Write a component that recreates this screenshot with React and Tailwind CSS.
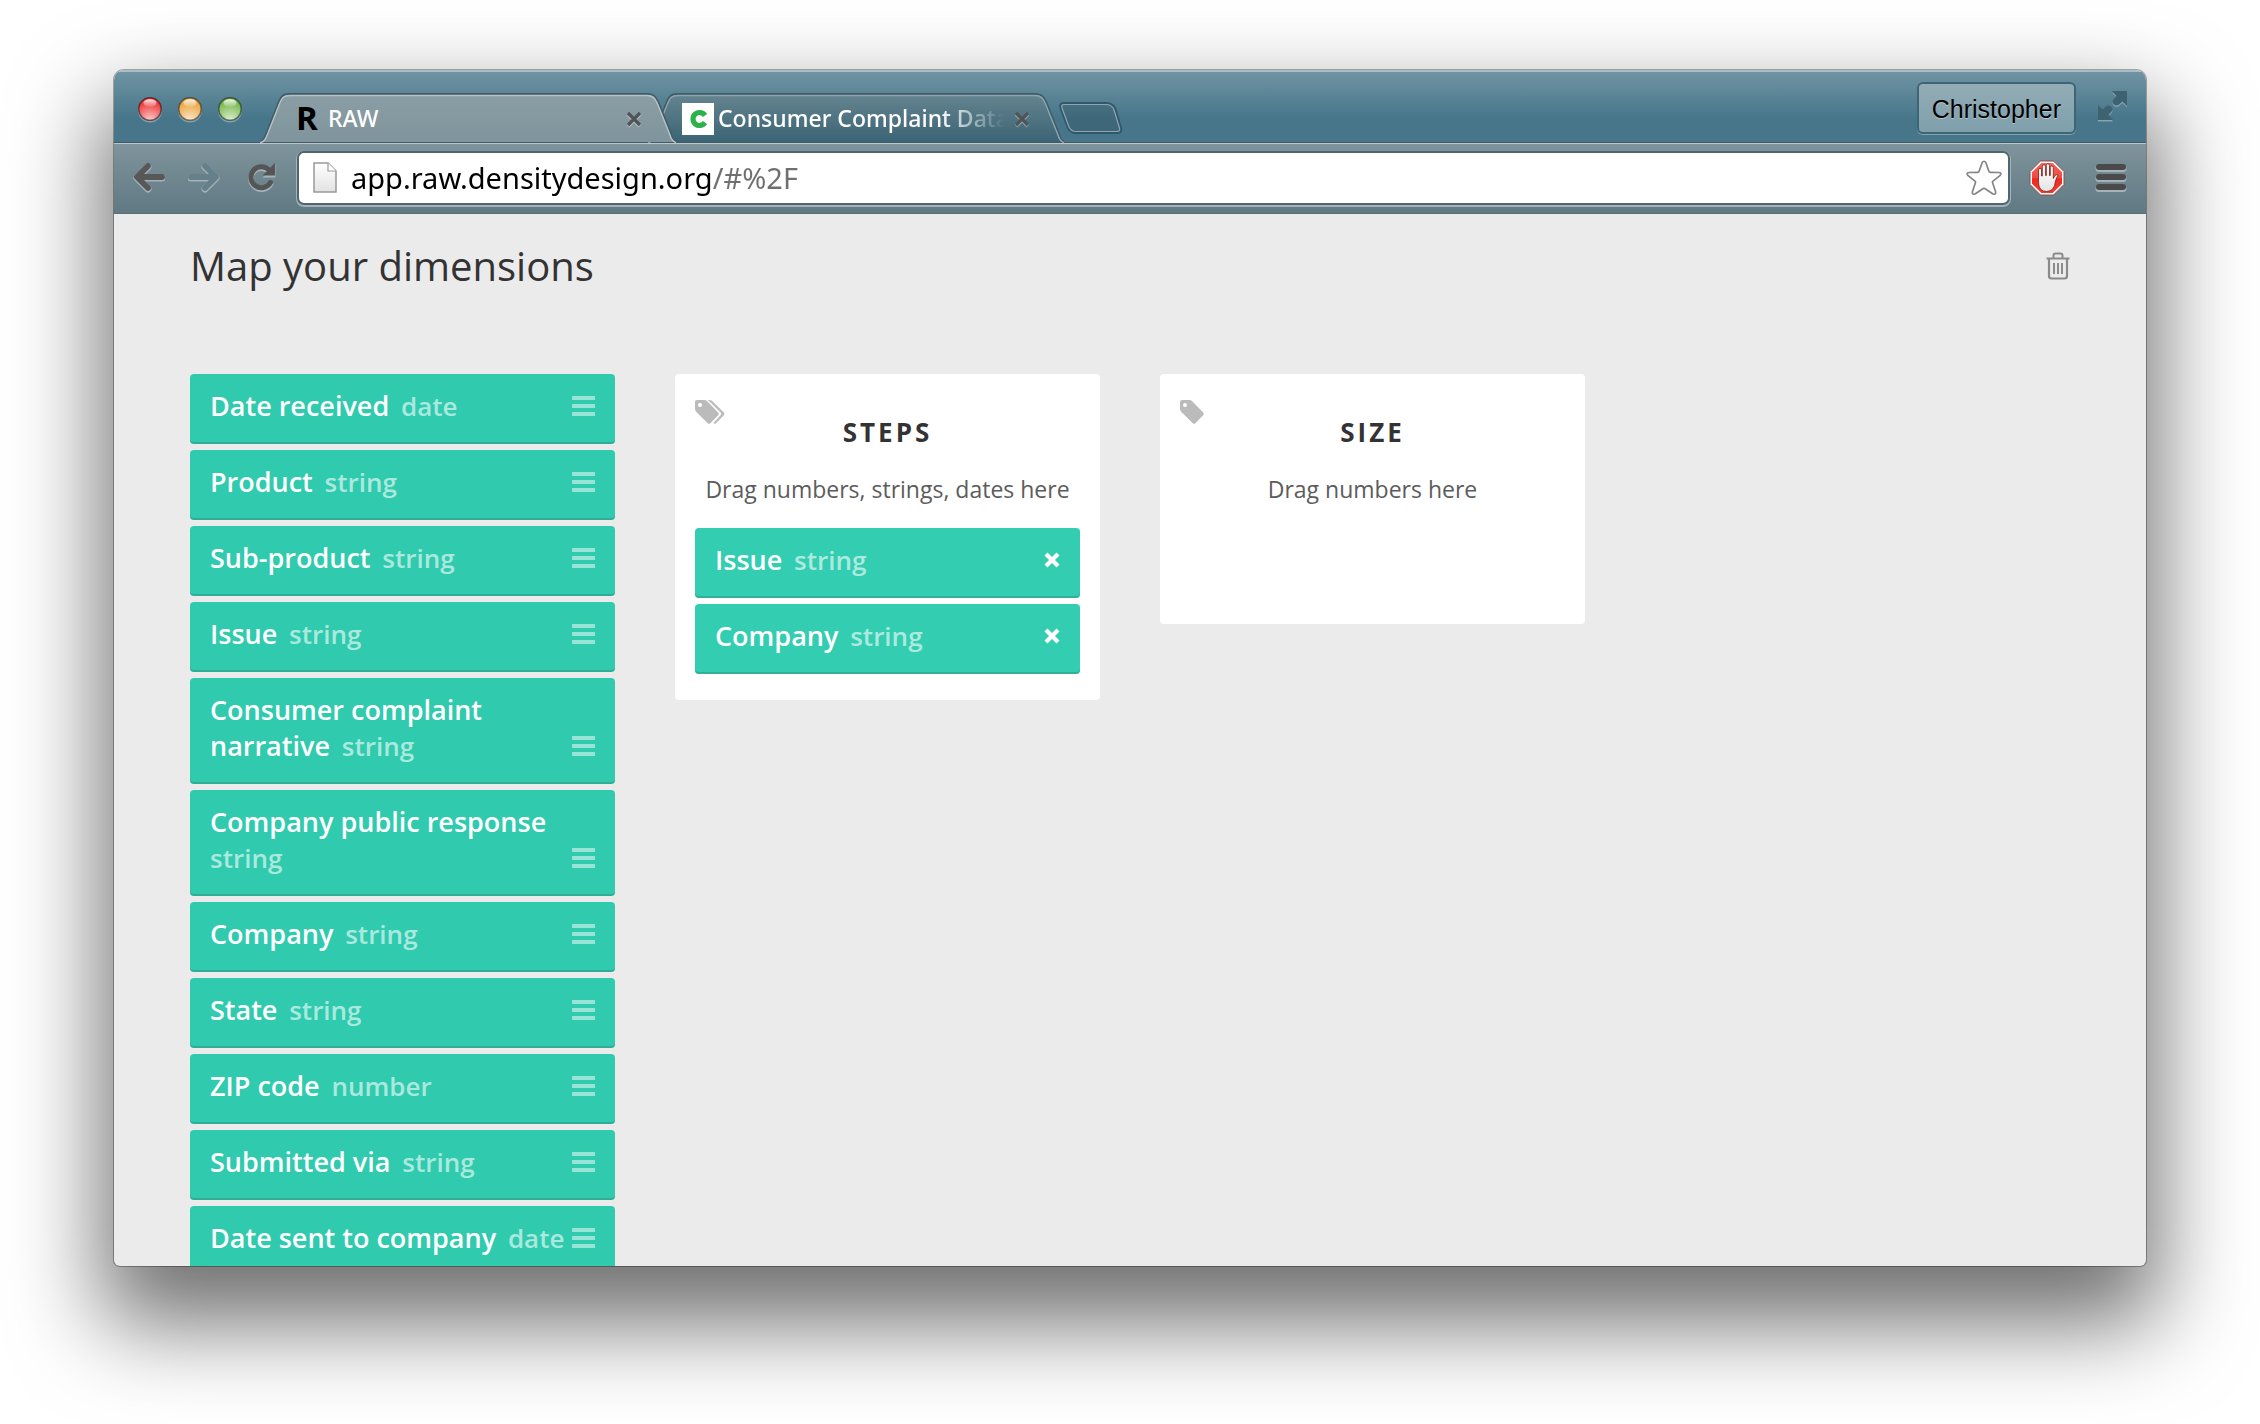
import React from "react";

const DIMENSIONS = [
  ["Date received", "date"],
  ["Product", "string"],
  ["Sub-product", "string"],
  ["Issue", "string"],
  ["Consumer complaint narrative", "string"],
  ["Company public response", "string"],
  ["Company", "string"],
  ["State", "string"],
  ["ZIP code", "number"],
  ["Submitted via", "string"],
  ["Date sent to company", "date"],
];

const TAG =
  "M0 2A2 2 0 0 1 2 0H9.3Q10.8 0 12 1.1L23.2 12.4Q24.3 13.8 23.2 15.2L15.4 23.2Q14.2 24.2 12.8 23.2L1.4 12Q0 10.5 0 9ZM5 3A2 2 0 1 0 5 7A2 2 0 1 0 5 3Z";

function TagIcon() {
  return (
    <svg width="24" height="24" viewBox="0 0 24 24" fill="#bbb" fillRule="evenodd" aria-hidden="true">
      <path d={TAG} />
    </svg>
  );
}

function TagsIcon() {
  return (
    <svg width="30" height="24" viewBox="0 0 30 24" fill="#bbb" fillRule="evenodd" aria-hidden="true">
      <path d={TAG} />
      <path d="M12 0H14.5Q16 0 17.2 1.1L28.8 12.4Q30 13.8 28.8 15.2L21 23.2Q19.8 24.2 18.3 23L25.6 15.3Q26.8 13.8 25.6 12.4L14 1.1Q13 .2 12 0Z" />
    </svg>
  );
}

function BarsIcon() {
  return (
    <svg width="23" height="20" viewBox="0 0 23 20" fill="#fff" fillOpacity="0.5" aria-hidden="true">
      <rect width="23" height="4" rx="0.5" />
      <rect y="8" width="23" height="4" rx="0.5" />
      <rect y="16" width="23" height="4" rx="0.5" />
    </svg>
  );
}

function Dimension({ name, type, removable }) {
  return (
    <li
      className={
        "flex items-end rounded-[4px] pt-[14px] pr-5 pb-5 pl-5 text-[26px] leading-9 text-white shadow-[inset_0_-2px_0_rgba(50,120,110,0.35)] " +
        (removable ? "bg-[#33cdb1]" : "cursor-move bg-[#30caae]")
      }
    >
      <span className="min-w-0 flex-1 font-semibold">
        <span className="pr-[5px] text-[27px]">{name}</span>{" "}
        <span className="text-white/60">{type}</span>
      </span>
      {removable ? (
        <button type="button" aria-label={"Remove " + name} className="flex h-9 items-center">
          <svg width="16" height="16" viewBox="0 0 16 16" stroke="#fff" strokeWidth="4.2" aria-hidden="true">
            <path d="M2 2L14 14M14 2L2 14" />
          </svg>
        </button>
      ) : (
        <span className="flex h-9 items-center">
          <BarsIcon />
        </span>
      )}
    </li>
  );
}

function DropPanel({ icon, title, hint, children }) {
  return (
    <section className="relative min-h-[250px] rounded-[4px] bg-white px-5 pt-10 pb-[26px] text-center">
      <span className="absolute top-[26px] left-5">{icon}</span>
      <h2 className="text-[26px] leading-9 font-bold tracking-[3px] text-[#333]">{title}</h2>
      <p className="-mx-4 mt-5 mb-5 text-[23px] leading-[38px] text-[#5c5c5c]">{hint}</p>
      <ul className="flex flex-col gap-[6px] text-left">{children}</ul>
    </section>
  );
}

function Light({ color }) {
  const id = "light-" + color.slice(1);
  return (
    <svg width="24" height="26" viewBox="0 0 24 26" aria-hidden="true">
      <defs>
        <radialGradient id={id} cx="0.5" cy="1" r="0.8">
          <stop offset="0" stopColor="#fff" stopOpacity="0.75" />
          <stop offset="1" stopColor="#fff" stopOpacity="0" />
        </radialGradient>
        <linearGradient id={id + "-top"} x1="0" y1="0" x2="0" y2="1">
          <stop offset="0" stopColor="#fff" stopOpacity="0.9" />
          <stop offset="1" stopColor="#fff" stopOpacity="0.1" />
        </linearGradient>
      </defs>
      <circle cx="12" cy="13.5" r="12" fill="#a9c2cc" opacity="0.6" />
      <circle cx="12" cy="12" r="11.5" fill={color} />
      <circle cx="12" cy="12" r="11.3" fill={"url(#" + id + ")"} stroke="#000" strokeOpacity="0.45" strokeWidth="1.6" />
      <ellipse cx="12" cy="6" rx="6.5" ry="3.8" fill={"url(#" + id + "-top)"} />
    </svg>
  );
}

function CloseIcon() {
  return (
    <svg width="16" height="18" viewBox="0 0 16 18" fill="none" aria-hidden="true">
      <path d="M2 4L14 16M14 4L2 16" stroke="#fff" strokeOpacity="0.35" strokeWidth="4" />
      <path d="M2 3L14 15M14 3L2 15" stroke="#505355" strokeWidth="3.2" />
    </svg>
  );
}

function Tab({ active, icon, title }) {
  const fill = active ? "tab-on" : "tab-off";
  return (
    <div className={active ? "relative z-10 h-[50px] w-[416px]" : "relative -ml-7 h-[50px] w-[416px]"}>
      <svg className="absolute inset-0" width="416" height="50" viewBox="0 0 416 50" fill="none" aria-hidden="true">
        <defs>
          <linearGradient id={fill} x1="0" y1="0" x2="0" y2="1">
            <stop offset="0" stopColor={active ? "#8b9ea5" : "#658490"} />
            <stop offset="1" stopColor={active ? "#7f949c" : "#3b6474"} />
          </linearGradient>
        </defs>
        <path
          d="M-1 49C4 48 5 44 7 39L18 11C21 3 23 1 30 1H387C394 1 396 4 399 11L411 41C412 45 414 48 417 49"
          fill={"url(#" + fill + ")"}
          stroke="#3f5d69"
          strokeWidth="2"
        />
        <path
          d="M-1 50C5 49 6 45 8 40L19 12C22 4 24 2.500 30 2.500H387C393 2.500 395 5 398 12L410 42C411 46 413 49 417 50"
          stroke={active ? "#b9c3c7" : "#8fa5ae"}
          strokeWidth="1.4"
        />
      </svg>
      <div className="relative flex h-12 items-center pt-1 pr-[34px] pl-[34px]">
        <button type="button" role="tab" aria-selected={active} className="flex min-w-0 flex-1 items-center gap-1 text-left">
          {icon}
          <span
            className={
              "min-w-0 flex-1 overflow-hidden pb-[2px] text-[23px] leading-[30px] font-medium whitespace-nowrap text-white " +
              (active ? "" : "[mask-image:linear-gradient(90deg,#000_75%,transparent_97%)]")
            }
          >
            {title}
          </span>
        </button>
        <button type="button" aria-label={"Close " + title}>
          <CloseIcon />
        </button>
      </div>
    </div>
  );
}

function NavArrow({ forward }) {
  const d = "M15 3L4 14L15 25M5 14H29";
  return (
    <svg width="32" height="30" viewBox="0 0 32 30" fill="none" strokeLinecap="round" strokeLinejoin="round" aria-hidden="true">
      <g transform={forward ? "translate(32 0) scale(-1 1)" : undefined}>
        <path d={d} transform="translate(0 1)" stroke="#a3b3b9" strokeWidth="7" />
        <path d={d} stroke={forward ? "#65808a" : "#585858"} strokeWidth="5.800" />
      </g>
    </svg>
  );
}

function ReloadIcon() {
  return (
    <svg width="30" height="30" viewBox="0 0 30 30" fill="none" aria-hidden="true">
      <g transform="translate(0 1.500)" stroke="#a3b3b9" fill="#a3b3b9">
        <path d="M22.500 7.500A10.500 10.500 0 1 0 23.500 19.500" fill="none" strokeWidth="5.500" strokeLinecap="round" />
        <path d="M28.500 0V13H15.500Z" stroke="none" />
      </g>
      <path d="M22.500 7.500A10.500 10.500 0 1 0 23.500 19.500" stroke="#555" strokeWidth="5" strokeLinecap="round" />
      <path d="M28 0V12.500H15.500Z" fill="#555" />
    </svg>
  );
}

function PageIcon() {
  return (
    <svg width="24" height="32" viewBox="0 0 24 32" aria-hidden="true">
      <defs>
        <linearGradient id="page" x1="0" y1="0" x2="0" y2="1">
          <stop offset="0" stopColor="#fff" />
          <stop offset="1" stopColor="#e2e2e4" />
        </linearGradient>
      </defs>
      <path d="M1 1H15L23 9V30H1Z" fill="url(#page)" stroke="#999" strokeWidth="1.500" />
      <path d="M15 1V9H23" fill="#fff" stroke="#999" strokeWidth="1.200" />
    </svg>
  );
}

function StarIcon() {
  return (
    <svg width="36" height="36" viewBox="0 0 36 36" fill="#fff" stroke="#858585" strokeWidth="1.700" strokeLinejoin="round" aria-hidden="true">
      <path d="M16.200 2.500Q18 0 19.800 2.500L23 11.500Q23.300 12.300 24.200 12.300L33 12.500Q36 13 34.200 15.300L27 21.200Q26.300 21.800 26.500 22.600L29.600 31.800Q30 35 27 34L18.800 28.500Q18 28 17.200 28.500L9 34Q6 35 6.400 31.800L9.500 22.600Q9.700 21.800 9 21.200L1.800 15.300Q0 13 3 12.500L11.800 12.300Q12.700 12.300 13 11.500Z" />
    </svg>
  );
}

function BlockIcon() {
  return (
    <svg width="36" height="36" viewBox="0 0 36 36" aria-hidden="true">
      <defs>
        <linearGradient id="stop" x1="0" y1="0" x2="0" y2="1">
          <stop offset="0" stopColor="#f4635c" />
          <stop offset="0.500" stopColor="#f04a41" />
          <stop offset="0.520" stopColor="#ee2a20" />
          <stop offset="1" stopColor="#fb3a2e" />
        </linearGradient>
        <linearGradient id="palm" x1="0" y1="0" x2="0" y2="1">
          <stop offset="0" stopColor="#fff" />
          <stop offset="1" stopColor="#e4e4e4" />
        </linearGradient>
      </defs>
      <path d="M11.500 1H24.500L35 11.500V24.500L24.500 35H11.500L1 24.500V11.500Z" fill="#fff" stroke="#8b4a4a" strokeWidth="1" />
      <path d="M12.300 3H23.700L33 12.300V23.700L23.700 33H12.300L3 23.700V12.300Z" fill="url(#stop)" />
      <path
        d="M9.500 20V10Q9.500 8.200 11 8.200T12.500 10V16H13.300V6.500Q13.300 4.800 15 4.800T16.600 6.500V15.500H17.300V5.500Q17.300 3.800 18.900 3.800T20.500 5.500V15.500H21.300V7.500Q21.300 5.900 22.800 5.900T24.300 7.500V18.500L26 15.500Q27.200 14 29 15.300Q27.500 17.500 26.500 21Q25.500 31.500 17.500 31.500Q9.500 31.500 9.500 22Z"
        fill="url(#palm)"
        stroke="#7c1d18"
        strokeWidth="0.800"
      />
    </svg>
  );
}

function MenuIcon() {
  return (
    <svg width="32" height="30" viewBox="0 0 32 30" aria-hidden="true">
      {[1, 11, 21].map((y) => (
        <g key={y}>
          <rect x="0.500" y={y + 1} width="31" height="7" rx="3.500" fill="#a3b3b9" />
          <rect x="1" y={y} width="30" height="6" rx="3" fill="#4a4a4a" />
        </g>
      ))}
    </svg>
  );
}

function FullscreenIcon() {
  const d =
    "M14 0H29V15L24.500 10.500L21 13.500Q18.500 15.500 16 13.500Q13.500 11 15.500 8.500L18.500 5ZM0 29V14L4.500 18.500L8 15.500Q10.500 13.500 13 15.500Q15.500 18 13.500 20.500L10.500 24L15 29Z";
  return (
    <svg width="30" height="31" viewBox="0 0 30 31" aria-hidden="true">
      <path d={d} transform="translate(0 1.500)" fill="#84a4b0" />
      <path d={d} fill="#3e6270" />
    </svg>
  );
}

function TrashIcon() {
  return (
    <svg width="24" height="28" viewBox="0 0 24 28" fill="none" stroke="#8a8a8a" aria-hidden="true">
      <path d="M0.500 6.500H23.500" strokeWidth="2" />
      <path d="M7.500 6V3.500Q7.500 1.500 9.500 1.500H14.500Q16.500 1.500 16.500 3.500V6" strokeWidth="2" />
      <path d="M3 7V24Q3 26.500 5.500 26.500H18.500Q21 26.500 21 24V7" strokeWidth="2.200" />
      <path d="M8 11V22M12 11V22M16 11V22" strokeWidth="2" />
    </svg>
  );
}

function Browser({ children }) {
  return (
    <div className="flex h-[calc(100vh-228px)] min-h-[600px] flex-col overflow-hidden rounded-t-[10px] rounded-b-[6px] bg-[#ebebeb] shadow-[0_0_0_1px_rgba(0,0,0,0.3),0_46px_90px_12px_rgba(0,0,0,0.56)]">
      <header className="shrink-0 font-['Noto_Sans','Open_Sans',sans-serif]">
        <div className="flex h-[73px] items-end border-t-2 border-[#a9bdc6] bg-linear-to-b from-[#6f94a3] to-[#47768a] to-65% pr-[18px] pl-6 shadow-[inset_0_-1px_0_#3f5d69]">
          <div className="mr-[18px] flex gap-4 self-center pt-1">
            {[["Close", "#ee3d3d"], ["Minimize", "#eda743"], ["Zoom", "#7cbb51"]].map(([label, color]) => (
              <button key={label} type="button" aria-label={label + " window"}>
                <Light color={color} />
              </button>
            ))}
          </div>
          <div role="tablist" className="flex">
            <Tab
              active
              title="RAW"
              icon={<span className="w-[30px] pb-[2px] pl-[2px] font-['Open_Sans',sans-serif] text-[33px] leading-8 font-bold text-black">R</span>}
            />
            <Tab
              active={false}
              title="Consumer Complaint Database"
              icon={
                <svg width="32" height="32" viewBox="0 0 32 32" aria-hidden="true">
                  <rect width="32" height="32" fill="#fff" />
                  <path d="M23 12.500A6.500 6.500 0 1 0 23 19.500" fill="none" stroke="#2cb24a" strokeWidth="5.200" />
                </svg>
              }
            />
          </div>
          <button type="button" aria-label="New tab" className="-ml-[5px] mb-2">
            <svg width="64" height="33" viewBox="0 0 64 33" fill="none" aria-hidden="true">
              <path d="M5 1H47Q54 1 56.500 7L62 26Q63 31 59 31H17Q11 31 8.500 25L1.500 6Q0 1 5 1Z" fill="#000" fillOpacity="0.12" stroke="#31586a" strokeWidth="2" />
              <path d="M5 2.500H47Q53 2.500 55 8L60.500 26Q61.500 29.500 58 29.500H17Q12 29.500 10 25L3 6Q2 2.500 5 2.500Z" stroke="#8ba6b1" strokeWidth="1.200" />
            </svg>
          </button>
          <div className="ml-auto flex items-center gap-[22px] pb-[9px]">
            <button
              type="button"
              className="h-[52px] rounded-[6px] border-2 border-[#3d6576] bg-linear-to-b from-[#93acb6] to-[#7ea0ac] px-[13px] pt-[3px] font-['Liberation_Sans',sans-serif] text-[25px] leading-[45px] text-black shadow-[0_1px_0_#84a4b0] [text-shadow:0_1px_0_rgba(255,255,255,0.4)]"
            >
              Christopher
            </button>
            <button type="button" aria-label="Full screen" className="mb-1">
              <FullscreenIcon />
            </button>
          </div>
        </div>
        <div className="flex h-[71px] items-center border-t border-b border-t-[#bcc6ca] border-b-[#5b6f78] bg-linear-to-b from-[#7f949c] to-[#607983] pr-[19px] pb-[2px] pl-[19px]">
          <div className="mr-5 flex items-center gap-[23px]">
            <button type="button" aria-label="Back"><NavArrow /></button>
            <button type="button" aria-label="Forward" disabled><NavArrow forward /></button>
            <button type="button" aria-label="Reload" className="ml-1"><ReloadIcon /></button>
          </div>
          <div className="flex h-[54px] flex-1 items-center rounded-[7px] border-2 border-[#506671] bg-white pr-[6px] pl-[14px] shadow-[0_1px_0_1px_#a3b3b9]">
            <PageIcon />
            <input
              type="text"
              aria-label="Address"
              defaultValue="app.raw.densitydesign.org/#%2F"
              className="ml-[14px] h-11 min-w-0 flex-1 bg-[linear-gradient(90deg,#000_361px,#6f6f6f_361px)] bg-clip-text text-[29px] text-transparent caret-black outline-none"
            />
            <button type="button" aria-label="Bookmark this page"><StarIcon /></button>
          </div>
          <button type="button" aria-label="Ad blocker" className="ml-[19px]"><BlockIcon /></button>
          <button type="button" aria-label="Menu" className="ml-[30px]"><MenuIcon /></button>
        </div>
      </header>
      {children}
    </div>
  );
}

export default function App() {
  return (
    <div className="min-h-screen overflow-hidden bg-white px-[114px] pt-[70px] pb-[158px]">
      <Browser>
        <main className="min-h-0 flex-1 overflow-hidden px-[76px] pt-6 font-['Open_Sans','Noto_Sans',sans-serif]">
          <div className="flex items-center justify-between">
            <h1 className="text-[40px] leading-[56px] text-[#333]">Map your dimensions</h1>
            <button type="button" aria-label="Clear mapping"><TrashIcon /></button>
          </div>
          <div className="mt-20 grid grid-cols-4 items-start gap-x-[60px]">
            <ul className="flex flex-col gap-[6px]">
              {DIMENSIONS.map(([name, type]) => (
                <Dimension key={name} name={name} type={type} />
              ))}
            </ul>
            <DropPanel icon={<TagsIcon />} title="STEPS" hint="Drag numbers, strings, dates here">
              <Dimension name="Issue" type="string" removable />
              <Dimension name="Company" type="string" removable />
            </DropPanel>
            <DropPanel icon={<TagIcon />} title="SIZE" hint="Drag numbers here" />
          </div>
        </main>
      </Browser>
    </div>
  );
}
